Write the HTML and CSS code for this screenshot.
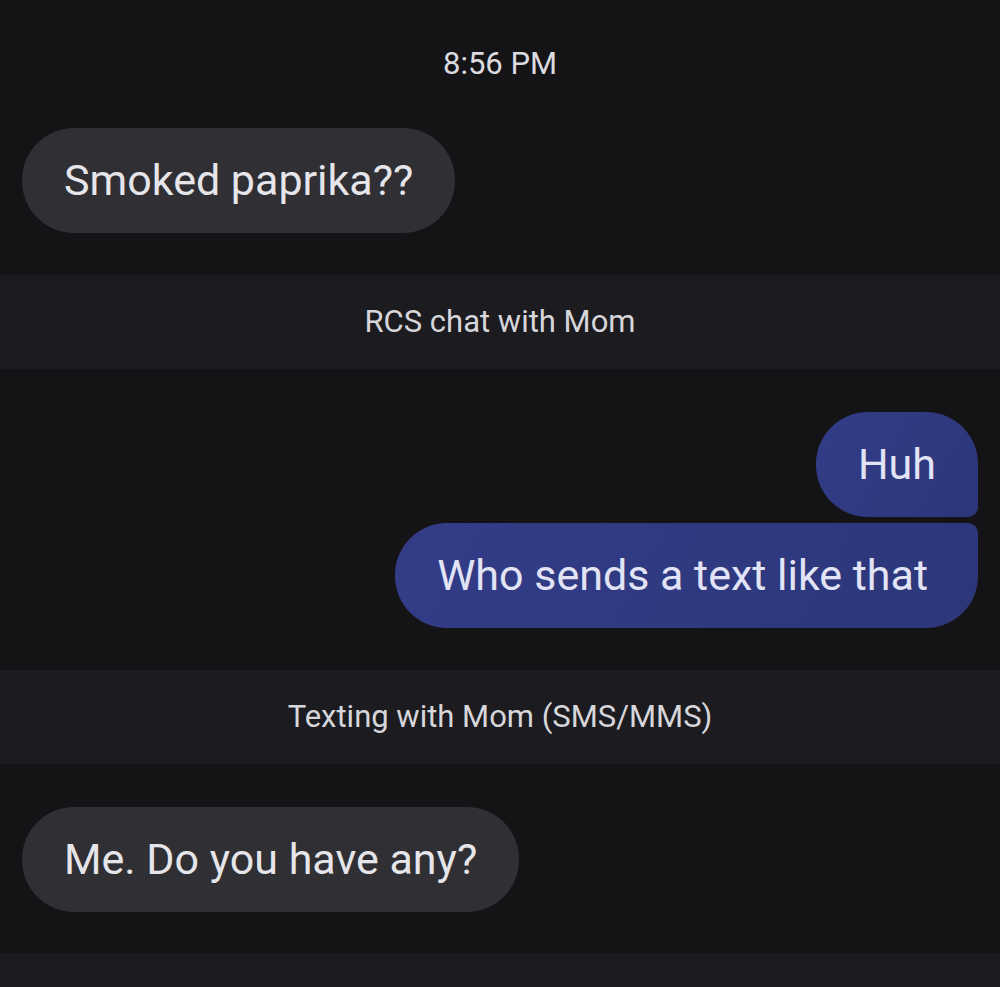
FILE: index.html
```html
<!DOCTYPE html>
<html lang="en">
<head>
    <meta charset="UTF-8">
    <meta name="viewport" content="width=device-width, initial-scale=1.0">
    <title>Mom - Messages</title>
    <link rel="stylesheet" href="styles.css">
</head>
<body>
    <div class="thread">
        <div class="timestamp">8:56 PM</div>

        <div class="row incoming">
            <div class="bubble received">Smoked paprika??</div>
        </div>

        <div class="divider">RCS chat with Mom</div>

        <div class="group outgoing">
            <div class="bubble sent first">Huh</div>
            <div class="bubble sent last">Who sends a text like that</div>
        </div>

        <div class="divider">Texting with Mom (SMS/MMS)</div>

        <div class="row incoming">
            <div class="bubble received">Me. Do you have any?</div>
        </div>

        <div class="divider bottom"></div>
    </div>
</body>
</html>
```

FILE: styles.css
```css
* {
    margin: 0;
    padding: 0;
    box-sizing: border-box;
}

body {
    font-family: 'Roboto', 'Noto Sans', sans-serif;
    background: #141417;
    color: #e3e3e8;
    min-height: 100vh;
}

.thread {
    display: flex;
    flex-direction: column;
    padding-top: 45px;
}

.timestamp {
    text-align: center;
    font-size: 31px;
    line-height: 38px;
    color: #dcdce0;
    margin-bottom: 45px;
}

.row {
    display: flex;
    padding: 0 22px;
}

.incoming {
    justify-content: flex-start;
}

.group {
    display: flex;
    flex-direction: column;
    align-items: flex-end;
    gap: 6px;
    padding: 0 22px;
}

.bubble {
    font-size: 43px;
    line-height: 105px;
    height: 105px;
    padding: 0 42px;
    border-radius: 52px;
    white-space: nowrap;
}

.received {
    background: #2f2f34;
    color: #e6e6ea;
}

.sent {
    background: linear-gradient(120deg, #333d88 0%, #2c3679 100%);
    color: #e2e4f6;
}

.sent.first {
    border-radius: 52px 52px 10px 52px;
}

.sent.last {
    border-radius: 52px 10px 52px 52px;
    padding-right: 50px;
}

.divider {
    background: #1c1c20;
    height: 94px;
    line-height: 94px;
    text-align: center;
    font-size: 31px;
    color: #d6d6db;
    margin: 42px 0 43px;
}

.divider.bottom {
    height: 40px;
    margin: 41px 0 0;
}
```
